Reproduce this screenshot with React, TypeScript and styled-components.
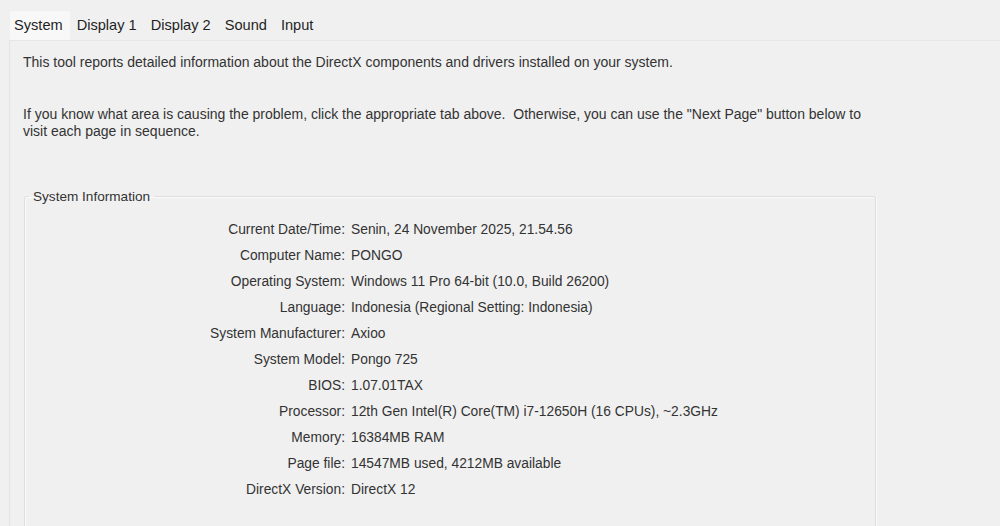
import styled, { createGlobalStyle } from "styled-components";

const GlobalStyle = createGlobalStyle`
  html, body {
    margin: 0;
    padding: 0;
    background: #f0f0f0;
  }
  body {
    width: 1000px;
    height: 526px;
    overflow: hidden;
  }
`;

const tabs = ["System", "Display 1", "Display 2", "Sound", "Input"];

const info: [string, string][] = [
  ["Current Date/Time:", "Senin, 24 November 2025, 21.54.56"],
  ["Computer Name:", "PONGO"],
  ["Operating System:", "Windows 11 Pro 64-bit (10.0, Build 26200)"],
  ["Language:", "Indonesia (Regional Setting: Indonesia)"],
  ["System Manufacturer:", "Axioo"],
  ["System Model:", "Pongo 725"],
  ["BIOS:", "1.07.01TAX"],
  ["Processor:", "12th Gen Intel(R) Core(TM) i7-12650H (16 CPUs), ~2.3GHz"],
  ["Memory:", "16384MB RAM"],
  ["Page file:", "14547MB used, 4212MB available"],
  ["DirectX Version:", "DirectX 12"],
];

export default function App() {
  return (
    <>
      <GlobalStyle />
      <Window>
        <TabBar>
          {tabs.map((t, i) => (
            <Tab key={t} $active={i === 0}>
              {t}
            </Tab>
          ))}
        </TabBar>
        <Panel>
          <Intro>
            This tool reports detailed information about the DirectX components and drivers
            installed on your system.
          </Intro>
          <Intro $gap>
            If you know what area is causing the problem, click the appropriate tab above.&nbsp;
            Otherwise, you can use the "Next Page" button below to visit each page in sequence.
          </Intro>
          <Group>
            <Legend>System Information</Legend>
            <InfoGrid>
              {info.map(([label, value]) => (
                <Row key={label}>
                  <Label>{label}</Label>
                  <Value>{value}</Value>
                </Row>
              ))}
            </InfoGrid>
          </Group>
        </Panel>
      </Window>
    </>
  );
}

const Window = styled.div`
  display: flex;
  flex-direction: column;
  height: 526px;
  font-family: "Liberation Sans", Arial, sans-serif;
`;

const TabBar = styled.div`
  display: flex;
  align-items: flex-end;
  padding: 12px 0 0 10px;
  height: 28px;
`;

const Tab = styled.div<{ $active?: boolean }>`
  display: flex;
  align-items: center;
  height: 28px;
  padding: 0 7px 1px ${(p) => (p.$active ? "4px" : "7px")};
  font-size: 14.6px;
  color: #1f1f1f;
  background: ${(p) => (p.$active ? "#f8f8f8" : "transparent")};
  border-radius: 2px 2px 0 0;
`;

const Panel = styled.div`
  flex: 1;
  margin-left: 9px;
  border-top: 1px solid #e6e6e6;
  border-left: 1px solid #e3e3e3;
  padding: 13px 0 0 13px;
`;

const Intro = styled.p<{ $gap?: boolean }>`
  margin: ${(p) => (p.$gap ? "35px" : "0")} 0 0;
  width: 860px;
  font-size: 14px;
  line-height: 17px;
  color: #333;
`;

const Group = styled.fieldset`
  margin: 49px 0 0 1px;
  width: 850px;
  padding: 12px 0 40px;
  border: 1px solid #dedede;
  box-shadow: inset 1px 1px 0 #fafafa, 1px 1px 0 #fafafa;
  border-radius: 2px;
`;

const Legend = styled.legend`
  margin-left: 4px;
  padding: 0 4px;
  font-size: 13.6px;
  color: #333;
`;

const InfoGrid = styled.div`
  display: flex;
  flex-direction: column;
`;

const Row = styled.div`
  display: grid;
  grid-template-columns: 320px 1fr;
  column-gap: 6px;
  height: 26px;
  align-items: center;
  font-size: 13.8px;
  color: #333;
`;

const Label = styled.span`
  text-align: right;
`;

const Value = styled.span``;
